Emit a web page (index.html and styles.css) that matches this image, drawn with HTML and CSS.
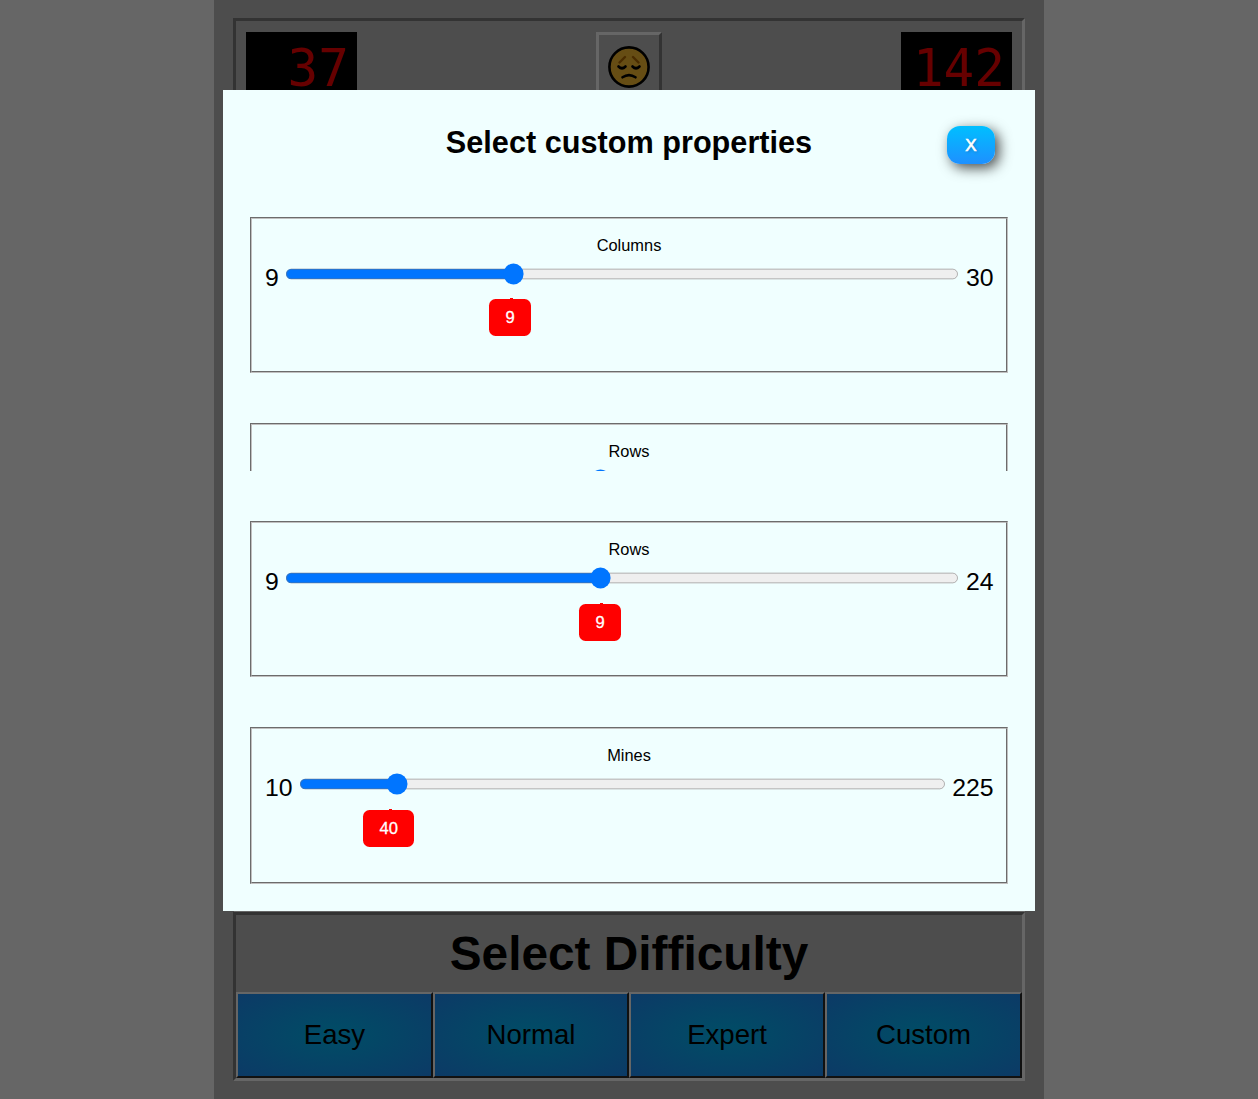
FILE: index.html
```html
<!DOCTYPE html>
<html lang="en">
<head>
<meta charset="utf-8">
<title>Minesweeper</title>
<link rel="stylesheet" href="styles.css">
</head>
<body>
<main class="game">
  <header class="status">
    <div class="counter">37</div>
    <button class="face" aria-label="Restart">
      <svg viewBox="0 0 44 44" width="44" height="44" fill="none" stroke-linecap="round">
        <circle cx="22" cy="22" r="19.6" fill="#664d14" stroke="#000" stroke-width="2.6"/>
        <path d="M12.5 17.5 18 12M26 12 31.5 17.5" stroke="#4a2c00" stroke-width="2.4"/>
        <path d="M11.5 21.5Q15 25 18.5 21.5M25.5 21.5Q29 25 32.5 21.5M15.5 32.3Q22 27.8 28.5 32.3" stroke="#000" stroke-width="2.6"/>
      </svg>
    </button>
    <div class="counter counter-time">142</div>
  </header>
  <section class="board"></section>
  <section class="difficulty">
    <h1>Select Difficulty</h1>
    <div class="levels">
      <button>Easy</button><button>Normal</button><button>Expert</button><button>Custom</button>
    </div>
  </section>
</main>

<div class="modal">
  <div class="pane pane-top">
    <div class="modal-head">
      <h2>Select custom properties</h2>
      <button class="close">X</button>
    </div>
    <div class="field">
      <label>Columns</label>
      <div class="slider"><span>9</span><input type="range" min="9" max="30" value="16"><span>30</span></div>
      <div class="bubble" style="margin-left:237px;--tip:21px">9</div>
    </div>
    <div class="field">
      <label>Rows</label>
      <div class="slider slider-bare"><input type="range" min="9" max="24" value="16"></div>
    </div>
  </div>
  <div class="pane pane-bottom">
    <div class="field">
      <label>Rows</label>
      <div class="slider"><span>9</span><input type="range" min="9" max="24" value="16"><span>24</span></div>
      <div class="bubble bubble-low" style="margin-left:327px;--tip:20.5px">9</div>
    </div>
    <div class="field field-last">
      <label>Mines</label>
      <div class="slider"><span>10</span><input type="range" min="10" max="225" value="40"><span>225</span></div>
      <div class="bubble bubble-low" style="margin-left:111px;--tip:26px">40</div>
    </div>
  </div>
</div>
</body>
</html>
```

FILE: styles.css
```css
* { box-sizing: border-box; }
body {
  margin: 0;
  height: 1099px;
  overflow: hidden;
  background: #666;
  font-family: "Liberation Sans", Arial, sans-serif;
  color: #000;
}
button { font: inherit; color: inherit; margin: 0; padding: 0; }

.game {
  display: flex;
  flex-direction: column;
  width: 830px;
  height: 1099px;
  margin: 0 auto;
  padding: 18px 19px;
  background: #4d4d4d;
}
.status, .board, .difficulty {
  border: 3px solid;
  border-color: #333 #666 #666 #333;
}
.status {
  display: flex;
  justify-content: space-between;
  height: 94px;
  padding: 11px 10px;
}
.counter {
  width: 111px;
  height: 66px;
  padding-right: 8px;
  background: #000;
  color: #600;
  font: 200 51px/73px "DejaVu Sans Mono", "DejaVu Sans", monospace;
  text-align: right;
}
.counter-time { padding-right: 7px; }
.face {
  display: flex;
  justify-content: center;
  width: 66px;
  height: 66px;
  padding-top: 10px;
  background: #4d4d4d;
  border: 3px solid;
  border-color: #666 #333 #333 #666;
}
.board { flex: 1; }
.difficulty { height: 169px; }
.difficulty h1 {
  height: 77px;
  margin: 0;
  font-size: 47.8px;
  line-height: 78px;
  text-align: center;
}
.levels {
  display: grid;
  grid-template-columns: 197px 196px 196px 197px;
  height: 86px;
}
.levels button {
  font-size: 27.6px;
  background: radial-gradient(#004d66, #0c3a66);
  border: 2px solid;
  border-color: #666 #111 #111 #666;
}

.modal {
  position: absolute;
  top: 90px;
  left: 223px;
  width: 812px;
  height: 821px;
  background: #f0ffff;
}
.pane {
  display: flex;
  flex-direction: column;
  gap: 50px;
  padding: 0 27px;
  overflow: hidden;
}
.pane-top { height: 381px; }
.pane-bottom { padding-top: 50px; }
.modal-head {
  display: grid;
  grid-template-columns: 1fr auto 1fr;
  flex: none;
  height: 77px;
  padding-top: 36px;
}
.modal-head h2 {
  grid-column: 2;
  margin: 0;
  font-size: 30.67px;
  line-height: 33px;
}
.close {
  justify-self: end;
  width: 48px;
  height: 38px;
  margin-right: 13px;
  padding-top: 1px;
  border: 0;
  border-radius: 13px;
  background: linear-gradient(#00bfff, #1e90ff);
  box-shadow: 4px 4px 13px rgba(0, 0, 0, .7);
  color: #fff;
  font-size: 17px;
  -webkit-text-stroke: .6px #fff;
  text-shadow: 1px 1px 3px rgba(0, 0, 0, .3);
}
.field {
  flex: none;
  height: 156px;
  border: 2px groove #c0c0c0;
}
.field-last { height: 157px; }
.field label {
  display: block;
  padding-top: 16px;
  font-size: 16.4px;
  line-height: 20px;
  text-align: center;
}
.slider {
  display: flex;
  gap: 6.5px;
  height: 31px;
  padding: 1px 12.5px 0 13px;
  font-size: 24.8px;
  line-height: 30px;
}
.slider-bare { padding: 1px 47.5px 0 34px; }
.slider span { position: relative; top: 7px; }
.slider input {
  flex: 1;
  min-width: 0;
  height: 16px;
  margin: 5.5px 0 0;
  zoom: 1.3333;
}
.bubble {
  position: relative;
  width: max-content;
  height: 37px;
  margin-top: 13px;
  padding: 0 16.5px;
  border-radius: 6.5px;
  background: #f00;
  color: #fff;
  font-size: 16.6px;
  line-height: 38.5px;
  -webkit-text-stroke: .3px #fff;
}
.bubble-low { margin-top: 14px; }
.bubble::before {
  content: "";
  position: absolute;
  top: -1px;
  left: var(--tip);
  width: 3px;
  height: 2px;
  background: #f00;
}
```
